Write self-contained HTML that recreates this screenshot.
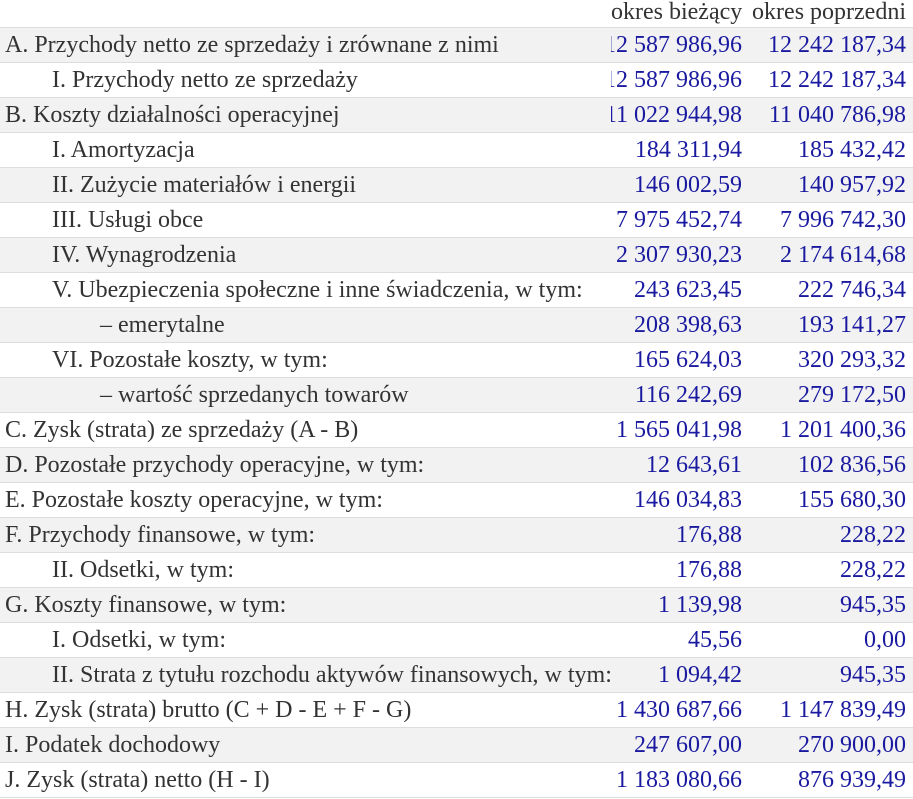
<!DOCTYPE html>
<html><head><meta charset="utf-8"><style>
body{margin:0;width:913px;height:799px;overflow:hidden;background:#fff;font-family:"Liberation Serif","Times New Roman","DejaVu Serif",serif;font-size:24px;color:#333}
.r{position:absolute;left:0;width:913px;height:34px;border-bottom:1px solid #ddd;line-height:35px;white-space:nowrap}
.g{background:#f2f2f2}
.l{position:absolute;left:5px;top:0}
.a{position:absolute;left:611px;width:131px;text-align:right;overflow:hidden;color:#1a1aa0;top:0;direction:rtl}
.b{position:absolute;left:740px;width:166px;text-align:right;color:#1a1aa0;top:0}
.h .a,.h .b{color:#333}
</style></head><body>
<div class="r h" style="top:0;height:27px;line-height:24px"><span class="a" style="direction:ltr;overflow:visible">okres bieżący</span><span class="b">okres poprzedni</span></div>
<div id="rows"></div>
<script>
var d=[
["A. Przychody netto ze sprzedaży i zrównane z nimi",0,"12 587 986,96","12 242 187,34"],
["I. Przychody netto ze sprzedaży",1,"12 587 986,96","12 242 187,34"],
["B. Koszty działalności operacyjnej",0,"11 022 944,98","11 040 786,98"],
["I. Amortyzacja",1,"184 311,94","185 432,42"],
["II. Zużycie materiałów i energii",1,"146 002,59","140 957,92"],
["III. Usługi obce",1,"7 975 452,74","7 996 742,30"],
["IV. Wynagrodzenia",1,"2 307 930,23","2 174 614,68"],
["V. Ubezpieczenia społeczne i inne świadczenia, w tym:",1,"243 623,45","222 746,34"],
["– emerytalne",2,"208 398,63","193 141,27"],
["VI. Pozostałe koszty, w tym:",1,"165 624,03","320 293,32"],
["– wartość sprzedanych towarów",2,"116 242,69","279 172,50"],
["C. Zysk (strata) ze sprzedaży (A - B)",0,"1 565 041,98","1 201 400,36"],
["D. Pozostałe przychody operacyjne, w tym:",0,"12 643,61","102 836,56"],
["E. Pozostałe koszty operacyjne, w tym:",0,"146 034,83","155 680,30"],
["F. Przychody finansowe, w tym:",0,"176,88","228,22"],
["II. Odsetki, w tym:",1,"176,88","228,22"],
["G. Koszty finansowe, w tym:",0,"1 139,98","945,35"],
["I. Odsetki, w tym:",1,"45,56","0,00"],
["II. Strata z tytułu rozchodu aktywów finansowych, w tym:",1,"1 094,42","945,35"],
["H. Zysk (strata) brutto (C + D - E + F - G)",0,"1 430 687,66","1 147 839,49"],
["I. Podatek dochodowy",0,"247 607,00","270 900,00"],
["J. Zysk (strata) netto (H - I)",0,"1 183 080,66","876 939,49"]];
var h="";d.forEach(function(x,i){var top=28+i*35;h+='<div class="r'+(i%2==0?' g':'')+'" style="top:'+top+'px"><span class="l" style="left:'+[5,52,100][x[1]]+'px">'+x[0]+'</span><span class="a"><bdi>'+x[2]+'</bdi></span><span class="b">'+x[3]+'</span></div>';});
document.getElementById("rows").innerHTML=h;
</script>
</body></html>
